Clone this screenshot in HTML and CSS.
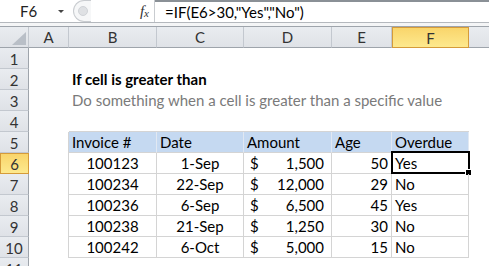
FILE: index.html
```html
<!DOCTYPE html>
<html lang="en">
<head>
  <meta charset="UTF-8">
  <title>If cell is greater than</title>
  <link rel="stylesheet" href="styles.css">
</head>
<body>

<!-- FORMULA BAR -->
<div class="formula-bar">
  <div class="name-box">
    <span class="cell-ref">F6</span>
    <span class="drop"></span>
  </div>
  <div class="grip"><span class="knob"></span></div>
  <div class="fx"><i>f</i><i class="fx-x">x</i></div>
  <div class="formula">=IF(E6&gt;30,"Yes","No")</div>
</div>
<div class="band"></div>

<!-- SHEET -->
<div class="sheet">
  <div class="corner">
    <svg width="14" height="13" viewBox="0 0 14 13"><polygon points="14,0 14,13 0,13" fill="#b9bfc7"/></svg>
  </div>
  <div class="ch">A</div>
  <div class="ch">B</div>
  <div class="ch">C</div>
  <div class="ch">D</div>
  <div class="ch">E</div>
  <div class="ch ch-on">F</div>
  <div class="ch ch-last"></div>

  <div class="rh">1</div>
  <div class="blank span7"></div>

  <div class="rh">2</div>
  <div class="blank"></div>
  <div class="cell title span6">If cell is greater than</div>

  <div class="rh">3</div>
  <div class="blank"></div>
  <div class="cell subtitle span6">Do something when a cell is greater than a specific value</div>

  <div class="rh">4</div>
  <div class="blank"></div>
  <div class="blank span5 table-top"></div>
  <div class="blank"></div>

  <div class="rh">5</div>
  <div class="blank table-left"></div>
  <div class="cell head">Invoice #</div>
  <div class="cell head">Date</div>
  <div class="cell head">Amount</div>
  <div class="cell head">Age</div>
  <div class="cell head">Overdue</div>
  <div class="blank"></div>

  <div class="rh rh-on">6</div>
  <div class="blank table-left"></div>
  <div class="cell td center">100123</div>
  <div class="cell td center">1-Sep</div>
  <div class="cell td money"><span>$</span><span>1,500</span></div>
  <div class="cell td right">50</div>
  <div class="cell td active">Yes<span class="select"><span class="handle"></span></span></div>
  <div class="blank"></div>

  <div class="rh">7</div>
  <div class="blank table-left"></div>
  <div class="cell td center">100234</div>
  <div class="cell td center">22-Sep</div>
  <div class="cell td money"><span>$</span><span>12,000</span></div>
  <div class="cell td right">29</div>
  <div class="cell td">No</div>
  <div class="blank"></div>

  <div class="rh">8</div>
  <div class="blank table-left"></div>
  <div class="cell td center">100236</div>
  <div class="cell td center">6-Sep</div>
  <div class="cell td money"><span>$</span><span>6,500</span></div>
  <div class="cell td right">45</div>
  <div class="cell td">Yes</div>
  <div class="blank"></div>

  <div class="rh">9</div>
  <div class="blank table-left"></div>
  <div class="cell td center">100238</div>
  <div class="cell td center">21-Sep</div>
  <div class="cell td money"><span>$</span><span>1,250</span></div>
  <div class="cell td right">30</div>
  <div class="cell td">No</div>
  <div class="blank"></div>

  <div class="rh">10</div>
  <div class="blank table-left"></div>
  <div class="cell td center">100242</div>
  <div class="cell td center">6-Oct</div>
  <div class="cell td money"><span>$</span><span>5,000</span></div>
  <div class="cell td right">15</div>
  <div class="cell td">No</div>
  <div class="blank"></div>

  <div class="rh">11</div>
  <div class="blank span7"></div>
</div>

</body>
</html>
```

FILE: styles.css
```css
html, body {
  margin: 0;
  padding: 0;
  background: #ffffff;
  color: #000000;
  font-family: Lato, 'Open Sans', sans-serif;
  font-size: 15px;
  overflow: hidden;
}

/* FORMULA BAR */
.formula-bar {
  display: flex;
  height: 23px;
  box-sizing: border-box;
  border-bottom: 1px solid #b4b8bd;
  background: #ffffff;
}

.name-box {
  width: 73px;
  display: flex;
  align-items: center;
  box-sizing: border-box;
  padding-left: 20px;
}

.cell-ref {
  width: 38px;
  color: #222;
}

.drop {
  width: 0;
  height: 0;
  border-left: 3px solid transparent;
  border-right: 3px solid transparent;
  border-top: 3px solid #444;
}

.grip {
  width: 18px;
  display: flex;
  align-items: center;
  justify-content: center;
  border: 1px solid #c9ccd0;
  border-right: none;
  border-radius: 11px 0 0 11px;
  box-sizing: border-box;
  height: 22px;
  background: #f6f7f8;
}

.knob {
  width: 8px;
  height: 8px;
  border-radius: 50%;
  background: #dfe1e4;
  border: 1px solid #d0d3d7;
}

.fx {
  width: 64px;
  display: flex;
  align-items: center;
  justify-content: flex-end;
  padding-right: 5px;
  box-sizing: border-box;
  font-family: 'Liberation Serif', serif;
  font-size: 15px;
  color: #333;
  border-right: 1px solid #c9ccd0;
}

.fx-x {
  font-size: 11px;
  margin-top: 4px;
}

.formula {
  flex: 1;
  display: flex;
  align-items: center;
  padding-left: 10px;
  border-top: 2px solid #8a9096;
  box-sizing: border-box;
}

.band {
  height: 4px;
  box-sizing: border-box;
  background: #f4f5f6;
  border-bottom: 1px solid #9ea4ab;
}

/* SHEET */
.sheet {
  display: grid;
  grid-template-columns: 29px 40px 88px 87px 88px 60px 77px 20px;
  grid-auto-rows: 21px;
}

.corner, .ch, .rh {
  box-sizing: border-box;
  background: linear-gradient(#e9ecf0, #dfe2e7);
  color: #333;
  display: flex;
  align-items: center;
  justify-content: center;
  border-right: 1px solid #c3c8cf;
  border-bottom: 1px solid #9ea4ab;
}

.corner {
  align-items: flex-end;
  justify-content: flex-end;
  padding: 0 2px 2px 0;
}

.ch-last {
  border-right: none;
}

.rh {
  border-right: 1px solid #9ea4ab;
  border-bottom: 1px solid #c3c8cf;
  padding-top: 1px;
}

.ch-on, .rh-on {
  background: linear-gradient(#f9d56b, #fde98e);
  border: 1px solid #d59b3a;
}

.blank {
  box-sizing: border-box;
}

.span5 { grid-column: span 5; }
.span6 { grid-column: span 6; }
.span7 { grid-column: span 7; }

.table-top {
  border-bottom: 1px solid #d4d4d4;
}

.table-left {
  border-right: 1px solid #d4d4d4;
}

.cell {
  box-sizing: border-box;
  display: flex;
  align-items: flex-end;
  padding: 0 3px 1px;
  white-space: nowrap;
  position: relative;
}

.title {
  font-weight: bold;
  padding-bottom: 2px;
}

.subtitle {
  color: #7a7a7a;
  padding-bottom: 2px;
}

.head {
  background: #c5d9f1;
  border-right: 1px solid #e1e8f2;
  border-bottom: 1px solid #d4d4d4;
}

.head:last-of-type {
  border-right: 1px solid #d4d4d4;
}

.td {
  border-right: 1px solid #d4d4d4;
  border-bottom: 1px solid #d4d4d4;
}

.center {
  justify-content: center;
}

.right {
  justify-content: flex-end;
}

.money {
  justify-content: space-between;
  padding: 0 7px 1px 6px;
}

.select {
  position: absolute;
  top: -2px;
  left: -1px;
  right: -2px;
  bottom: -1px;
  border: 2px solid #000;
}

.handle {
  position: absolute;
  right: -4px;
  bottom: -4px;
  width: 5px;
  height: 5px;
  background: #000;
  border: 1px solid #fff;
}
```
